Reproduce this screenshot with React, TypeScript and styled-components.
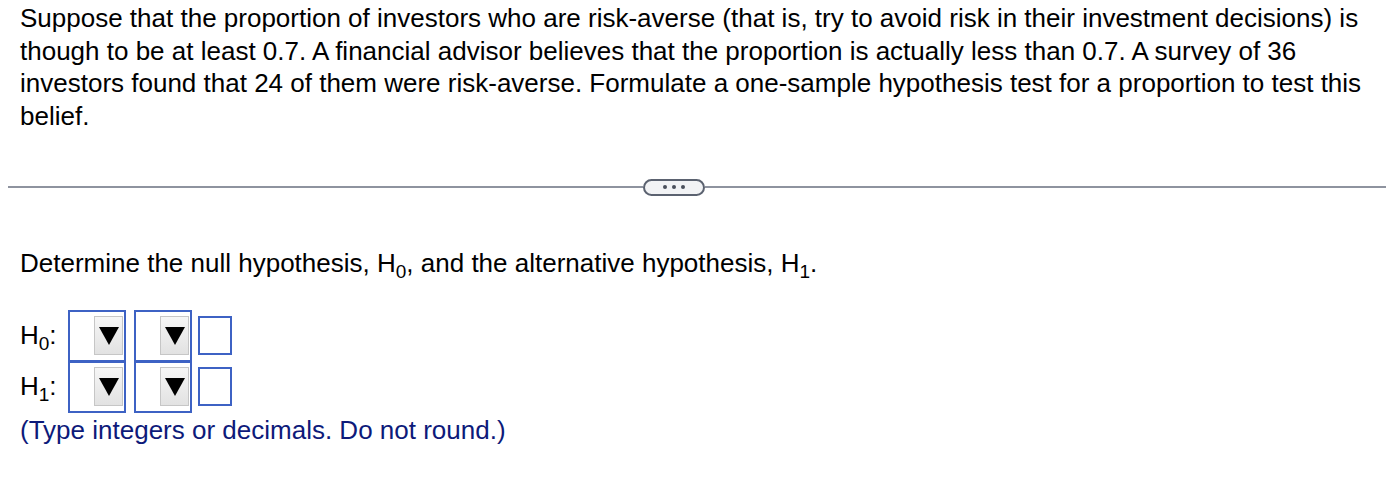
import React from 'react';
import styled, { createGlobalStyle } from 'styled-components';

const GlobalStyle = createGlobalStyle`
	body {
		margin: 0;
		background: #ffffff;
		font-family: 'Liberation Sans', Arial, sans-serif;
		color: #000000;
	}
`;

const Page = styled.div`
	width: 1386px;
	padding-top: 2px;
`;

const Question = styled.p`
	margin: 0;
	padding: 0 20px;
	font-size: 26px;
	line-height: 32.5px;
	white-space: nowrap;
`;

const Divider = styled.div`
	display: flex;
	align-items: center;
	margin: 46px 0 0 8px;
	height: 18px;
`;

const Rule = styled.div<{ $width?: number }>`
	flex: ${(p) => (p.$width ? `0 0 ${p.$width}px` : '1')};
	height: 2px;
	background-color: #8e939f;
`;

const Pill = styled.div`
	box-sizing: border-box;
	width: 62px;
	height: 17px;
	border: 2px solid #5b6270;
	border-radius: 9px;
	background-color: #f2f3f5;
	display: flex;
	justify-content: center;
	align-items: center;
	gap: 5px;
`;

const Dot = styled.span`
	width: 4px;
	height: 4px;
	border-radius: 50%;
	background-color: #4a505c;
`;

const Prompt = styled.p`
	margin: 51px 0 0;
	padding: 0 20px;
	font-size: 26px;
	line-height: 32.5px;
`;

const Sub = styled.sub`
	font-size: 19px;
	vertical-align: -6px;
	line-height: 0;
`;

const Answers = styled.div`
	margin-top: 30px;
	padding-left: 20px;
	display: flex;
	flex-direction: column;
`;

const Row = styled.div`
	display: flex;
	align-items: center;
	height: 52px;

	& + & {
		margin-top: -1px;
	}
`;

const Label = styled.span`
	width: 48px;
	font-size: 26px;
`;

const Select = styled.div`
	box-sizing: border-box;
	width: 58px;
	height: 52px;
	border: 2px solid #3d62c4;
	margin-right: 8px;
	display: flex;
	align-items: center;
	justify-content: flex-end;
	padding-right: 1px;
`;

const Arrow = styled.div`
	box-sizing: border-box;
	width: 29px;
	height: 39px;
	border: 1px solid #c6c6c6;
	background: linear-gradient(#f6f6f6, #e2e2e2);
	display: flex;
	align-items: center;
	justify-content: center;

	&::after {
		content: '';
		border-left: 10px solid transparent;
		border-right: 10px solid transparent;
		border-top: 18px solid #000000;
	}
`;

const Blank = styled.div`
	box-sizing: border-box;
	width: 34px;
	height: 39px;
	border: 2px solid #3d62c4;
	margin-left: -2px;
`;

const Hint = styled.p`
	margin: 3px 0 0;
	padding: 0 20px;
	font-size: 26px;
	line-height: 28px;
	color: #0d1a7a;
`;

const hypotheses = ['0', '1'];

export default function App() {
	return (
		<>
			<GlobalStyle />
			<Page>
				<Question>
					Suppose that the proportion of investors who are risk-averse (that is, try to avoid risk in their investment decisions) is
					<br />
					though to be at least 0.7. A financial advisor believes that the proportion is actually less than 0.7. A survey of 36
					<br />
					investors found that 24 of them were risk-averse. Formulate a one-sample hypothesis test for a proportion to test this
					<br />
					belief.
				</Question>
				<Divider>
					<Rule $width={635} />
					<Pill>
						<Dot />
						<Dot />
						<Dot />
					</Pill>
					<Rule />
				</Divider>
				<Prompt>
					Determine the null hypothesis, H<Sub>0</Sub>, and the alternative hypothesis, H<Sub>1</Sub>.
				</Prompt>
				<Answers>
					{hypotheses.map((h) => (
						<Row key={h}>
							<Label>
								H<Sub>{h}</Sub>:
							</Label>
							<Select>
								<Arrow />
							</Select>
							<Select>
								<Arrow />
							</Select>
							<Blank />
						</Row>
					))}
				</Answers>
				<Hint>(Type integers or decimals. Do not round.)</Hint>
			</Page>
		</>
	);
}
